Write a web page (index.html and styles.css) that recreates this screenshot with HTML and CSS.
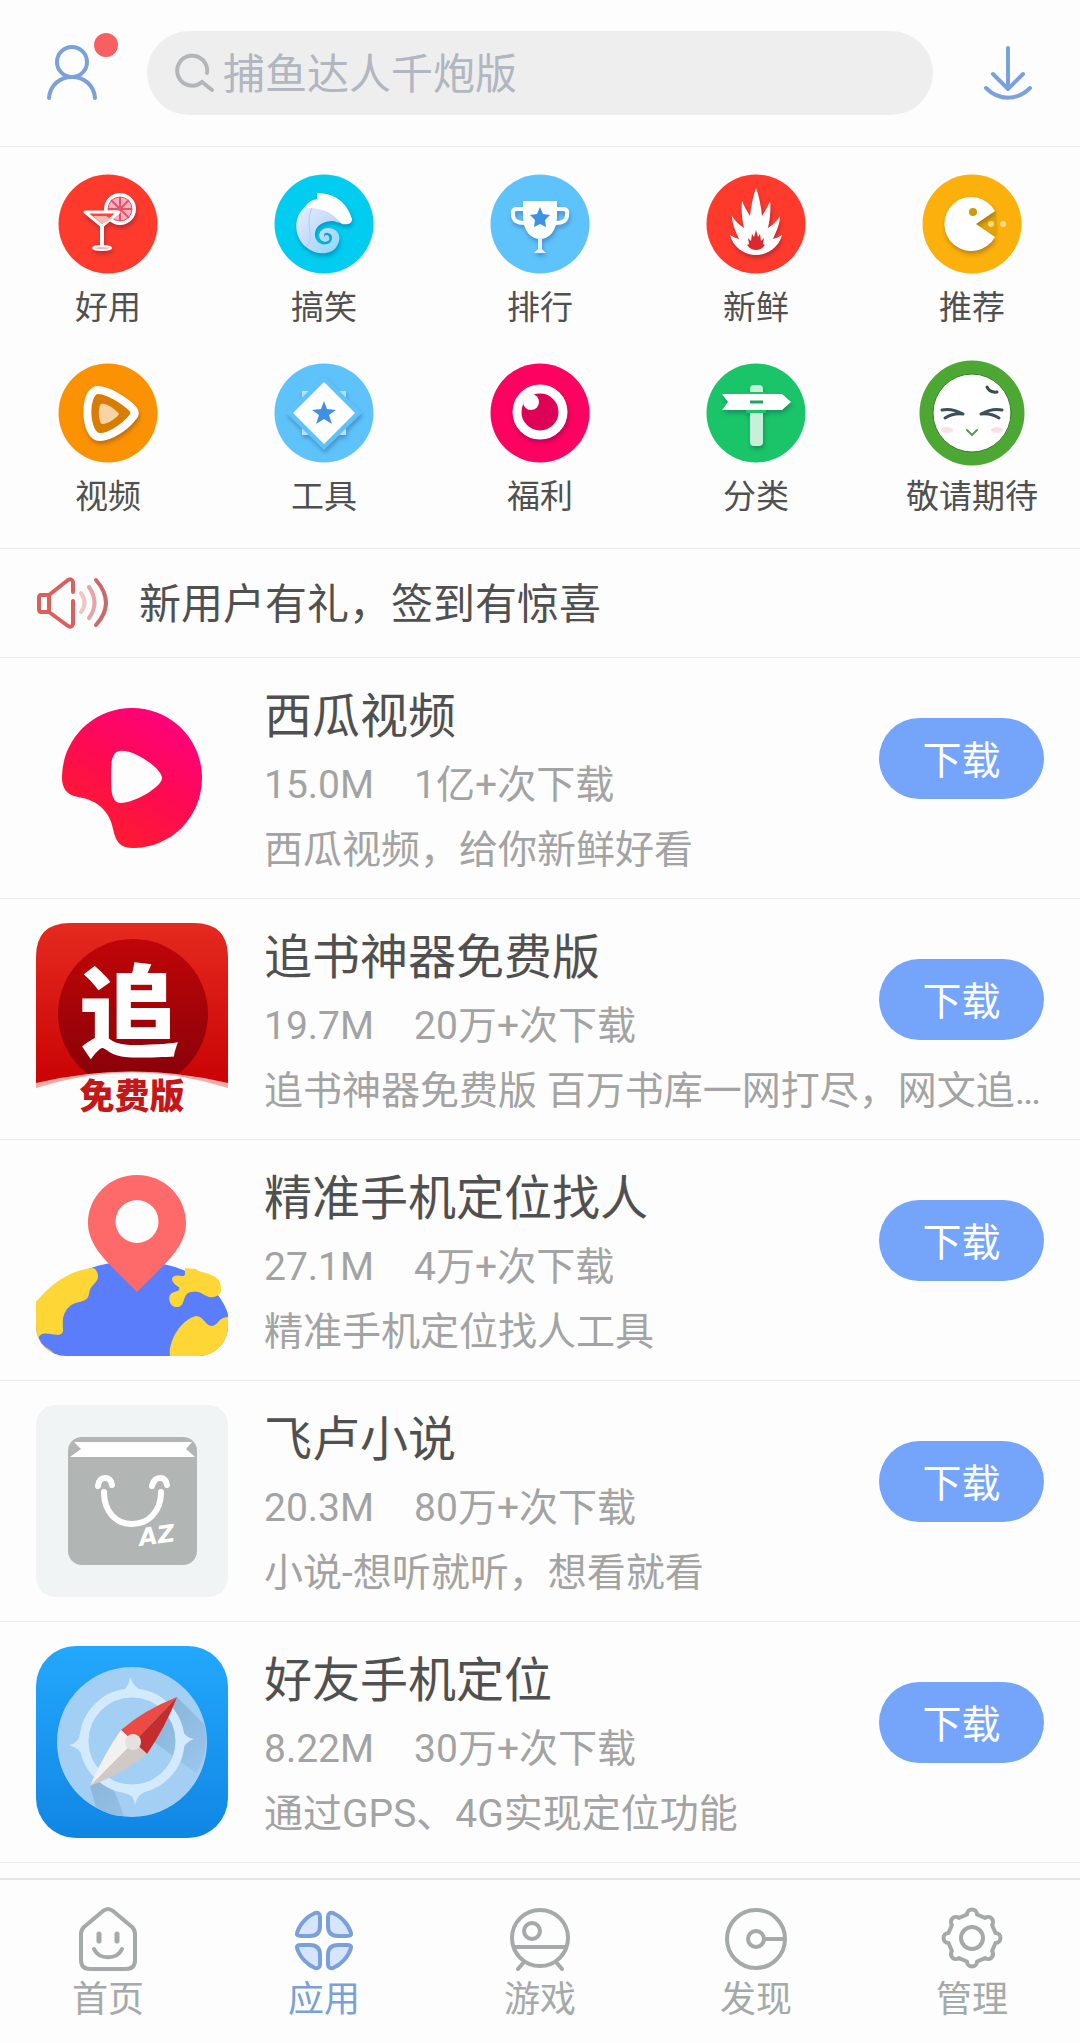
FILE: index.html
```html
<!DOCTYPE html>
<html lang="zh-CN">
<head>
<meta charset="utf-8">
<meta name="viewport" content="width=device-width, initial-scale=1">
<title>应用</title>
<link rel="stylesheet" href="styles.css">
</head>
<body>
<header class="topbar">
  <button class="icon-button profile" type="button" aria-label="我的">
    <svg width="50" height="54" viewBox="0 0 50 54" fill="none" stroke="#7ba1dc" stroke-width="4" stroke-linecap="round"><circle cx="25" cy="16" r="15"/><path d="M2 52C3 39 13 31 25 31S47 39 48 52"/></svg>
    <span class="dot"></span>
  </button>
  <label class="search">
    <svg width="40" height="40" viewBox="0 0 40 40" fill="none" stroke="#b3b6b9" stroke-width="4" stroke-linecap="round"><path d="M32 20A15 15 0 1 0 27 29L37 37"/></svg>
    <input class="search-input" type="search" placeholder="捕鱼达人千炮版" aria-label="搜索">
  </label>
  <button class="icon-button" type="button" aria-label="下载管理">
    <svg width="50" height="56" viewBox="0 0 50 56" fill="none" stroke="#7ba1dc" stroke-width="4" stroke-linecap="round" stroke-linejoin="round"><path d="M25 3V44M10 29L25 44L40 29M3 43C16 56 34 56 47 43"/></svg>
  </button>
</header>

<nav class="categories" aria-label="频道">
  <a class="category" href="#haoyong">
    <svg class="category-icon" viewBox="-53 -53 106 106">
      <circle r="49.500" fill="#fe3a2d"/>
      <g class="soft-shadow">
        <circle cx="12" cy="-15" r="14" fill="#fbaebd" stroke="#fff" stroke-width="4"/>
        <circle cx="12" cy="-15" r="12" fill="none" stroke="#e0546c" stroke-width="1"/>
        <path d="M12 -27V-3M0 -15H24M3 -24L21 -6M21 -24L3 -6" stroke="#e0546c" stroke-width="2"/>
        <path d="M-23 -12H11L-6 2Z" fill="#fe4438" stroke="#fff" stroke-width="3" stroke-linejoin="round"/>
        <path d="M-15 -8H-2L4 -5L-6 0Z" fill="#fbb9b9"/>
        <path d="M-6 2V23" stroke="#fff" stroke-width="4"/>
        <ellipse cx="-6" cy="24" rx="9" ry="2" fill="#fbaebd" stroke="#fff" stroke-width="2"/>
      </g>
    </svg>
    <span>好用</span>
  </a>
  <a class="category" href="#gaoxiao">
    <svg class="category-icon" viewBox="-53 -53 106 106">
      <defs><linearGradient id="tail" x1="0" y1="0" x2="1" y2="1"><stop offset="0" stop-color="#e6eefc"/><stop offset=".5" stop-color="#c4dbfa"/><stop offset="1" stop-color="#7fdcf8"/></linearGradient></defs>
      <circle r="49.500" fill="#02cdf0"/>
      <g class="soft-shadow">
        <path d="M-18 -18C-31 -8 -31 12 -18 23C-8 32 8 31 13 22C19 12 13 4 4 4C-4 4 -7 12 -3 16C1 20 7 17 5 13C4 10 0 11 1 13C-1 12 0 8 4 9C10 10 9 19 3 20C-4 22 -10 16 -9 9C-8 1 0 -3 9 -3L20 0C16 -12 0 -20 -18 -18Z" fill="url(#tail)"/>
        <path d="M-18 23C-8 12 -20 2 -12 -16" fill="none" stroke="#a9cdf7" stroke-width="1"/>
        <path d="M-7 -31C10 -31 23 -22 28 -5C28 0 23 1 18 0C10 -10 0 -17 -20 -16C-16 -22 -12 -24 -7 -25Z" fill="#fff"/>
      </g>
    </svg>
    <span>搞笑</span>
  </a>
  <a class="category" href="#paihang">
    <svg class="category-icon" viewBox="-53 -53 106 106">
      <circle r="49.500" fill="#5fc3fb"/>
      <g class="soft-shadow">
        <path d="M-15 -15H-24Q-28 -15 -27 -9Q-27 -1 -15 -1M15 -15H24Q28 -15 27 -9Q27 -1 15 -1" fill="none" stroke="#fff" stroke-width="4"/>
        <path d="M-17 -23H17V-8C17 7 9 15 0 15S-17 7 -17 -8Z" fill="#fff"/>
        <path d="M-2 14H2V25L6 29H-6L-2 25Z" fill="#dff1fe"/>
        <path d="M0 -17L3 -10L10 -9L5 -4L6 3L0 0L-6 3L-5 -4L-10 -9L-3 -10Z" fill="#3b93e4"/>
      </g>
    </svg>
    <span>排行</span>
  </a>
  <a class="category" href="#xinxian">
    <svg class="category-icon" viewBox="-53 -53 106 106">
      <circle r="49.500" fill="#fe3a2d"/>
      <g class="soft-shadow">
        <path d="M0 -36C3 -28 5 -18 6 -8C9 -13 12 -18 14 -23C15 -14 14 -5 12 4C17 1 21 -3 24 -8C24 0 20 8 17 15C20 14 23 13 26 11C23 23 12 31 0 31S-23 23 -26 11C-23 13 -20 14 -17 15C-20 8 -24 0 -24 -8C-21 -3 -17 1 -12 4C-14 -5 -15 -14 -14 -23C-12 -18 -9 -13 -6 -8C-5 -18 -3 -28 0 -36Z" fill="#fff"/>
        <path d="M0 6L2 13L4 10L5 17L8 14L7 20L9 21C6 25 3 26 0 26S-6 25 -9 21L-7 20L-8 14L-5 17L-4 10L-2 13Z" fill="#d9292f"/>
      </g>
    </svg>
    <span>新鲜</span>
  </a>
  <a class="category" href="#tuijian">
    <svg class="category-icon" viewBox="-53 -53 106 106">
      <circle r="49.500" fill="#fcb00c"/>
      <path d="M4 0L24 -13L26 10L22 14Z" fill="#e3a408"/>
      <g class="soft-shadow">
        <path d="M4 0L23 -13A27 27 0 1 0 23 13Z" fill="#fff"/>
        <circle cx="1" cy="-12" r="4" fill="#d1990c"/>
      </g>
      <circle cx="19" cy="0" r="3" fill="#f8d784"/><circle cx="31" cy="0" r="3" fill="#f8d784"/>
    </svg>
    <span>推荐</span>
  </a>
  <a class="category" href="#shipin">
    <svg class="category-icon" viewBox="-53 -53 106 106">
      <circle r="49.500" fill="#fb9203"/>
      <g class="soft-shadow">
        <path d="M-10 -23C0 -23 17 -12 24 -5Q29 0 24 5C17 14 2 24 -8 24C-24 24 -25 -23 -10 -23Z" fill="#d97c03" stroke="#fff" stroke-width="8" stroke-linejoin="round"/>
        <path d="M-7 -9C-3 -11 9 -3 11 1C9 5 -2 12 -6 11C-10 9 -10 -7 -7 -9Z" fill="#f8d3a3"/>
      </g>
    </svg>
    <span>视频</span>
  </a>
  <a class="category" href="#gongju">
    <svg class="category-icon" viewBox="-53 -53 106 106">
      <circle r="49.500" fill="#5fc3fb"/>
      <g class="soft-shadow">
        <path d="M-22 -22H22V22H-22Z" fill="#b8e2fd"/>
        <path d="M0 -37L38 0L0 37L-38 0Z" fill="#5fc3fb"/>
        <path d="M0 -31L31 0L0 31L-31 0Z" fill="#fff"/>
        <path d="M0 -12L3 -4L12 -3L5 2L8 11L0 6L-8 11L-5 2L-12 -3L-3 -4Z" fill="#3f90e3"/>
      </g>
    </svg>
    <span>工具</span>
  </a>
  <a class="category" href="#fuli">
    <svg class="category-icon" viewBox="-53 -53 106 106">
      <circle r="49.500" fill="#fd0261"/>
      <g class="soft-shadow">
        <circle cx="0" cy="-1" r="23" fill="#de0257" stroke="#fff" stroke-width="9"/>
        <circle cx="-9" cy="-11" r="8" fill="#fff"/>
      </g>
    </svg>
    <span>福利</span>
  </a>
  <a class="category" href="#fenlei">
    <svg class="category-icon" viewBox="-53 -53 106 106">
      <circle r="49.500" fill="#19c568"/>
      <g class="soft-shadow">
        <rect x="-6" y="-28" width="13" height="61" rx="4" fill="#c6f0d8"/>
        <path d="M-10 -21H10V-19H-10ZM-10 -3H10V0H-10Z" fill="#19c568"/>
        <path d="M-34 -19H26L35 -11L26 -3H-34L-28 -11Z" fill="#fff"/>
        <path d="M-6 -11H7" stroke="#1aa75c" stroke-width="3"/>
      </g>
    </svg>
    <span>分类</span>
  </a>
  <a class="category" href="#jingqing">
    <svg class="category-icon" viewBox="-53 -53 106 106" fill="none" stroke-linecap="round">
      <circle r="52.500" fill="#4da833"/><circle r="39" fill="#fff" stroke="#35802a" stroke-width="1"/>
      <path d="M15 -26Q18 -20 25 -21" stroke="#3b4a50" stroke-width="3"/>
      <path d="M-30 -3Q-20 -5 -9 1M-27 5Q-19 0 -9 1M30 -3Q20 -5 9 1M27 5Q19 0 9 1" stroke="#3c5058" stroke-width="3"/>
      <path d="M-5 17L0 22L5 17" stroke="#5a9a56" stroke-width="2"/>
      <ellipse cx="-25" cy="17" rx="6" ry="3" fill="#fbdfe6"/><ellipse cx="25" cy="17" rx="6" ry="3" fill="#fbdfe6"/>
    </svg>
    <span>敬请期待</span>
  </a>
</nav>

<a class="notice" href="#signin">
  <svg width="74" height="52" viewBox="0 0 74 52" fill="none" stroke="#d9605c" stroke-width="4" stroke-linecap="round" stroke-linejoin="round">
    <path d="M37 15V5Q36 1 32 3L13 18H5Q3 18 3 21V32Q3 35 5 35H13L32 49Q36 51 37 47V24M13 18V35"/>
    <path d="M45 16Q52 26 45 35" stroke="#f3c4c4"/><path d="M53 10Q64 26 53 41" stroke="#e7a3a5"/><path d="M60 3Q80 26 60 48" stroke="#cb6a6b"/>
  </svg>
  <span class="notice-text">新用户有礼，签到有惊喜</span>
</a>

<main>
<ul class="apps">
  <li class="app">
    <svg class="app-icon" viewBox="0 0 192 192">
      <defs><linearGradient id="melon" x1=".8" y1=".1" x2=".3" y2=".9"><stop offset="0" stop-color="#fc0279"/><stop offset=".5" stop-color="#fd0a53"/><stop offset="1" stop-color="#fe1b30"/></linearGradient></defs>
      <path fill="url(#melon)" fill-rule="evenodd" d="M96 26C135 26 166 57 166 96C166 135 135 166 97 166C85 166 80 161 77 147C74 130 62 118 42 115C30 113 26 105 26 96C26 57 57 26 96 26ZM83 69C75 71 75 82 75 96C75 110 76 121 85 121C98 121 126 105 126 96C126 86 96 66 83 69Z"/>
    </svg>
    <h2 class="app-name">西瓜视频</h2>
    <p class="app-meta"><span>15.0M</span><span>1亿+次下载</span></p>
    <p class="app-desc">西瓜视频，给你新鲜好看</p>
    <button class="download" type="button">下载</button>
  </li>
  <li class="app">
    <svg class="app-icon" viewBox="0 0 192 192">
      <defs>
        <linearGradient id="book" x1="0" y1="0" x2="0" y2="1"><stop offset="0" stop-color="#e52a1f"/><stop offset="1" stop-color="#c90204"/></linearGradient>
        <linearGradient id="disc" x1="0" y1="0" x2="0" y2="1"><stop offset="0" stop-color="#c00508"/><stop offset="1" stop-color="#8a0209"/></linearGradient>
      </defs>
      <path d="M0 165V34Q0 0 34 0H158Q192 0 192 34V165Q96 136 0 165Z" fill="url(#book)"/>
      <path d="M52 151A75 75 0 1 1 142 151Q96 145 52 151Z" fill="url(#disc)"/>
      <path d="M0 160Q96 137 192 160V166Q96 136 0 166Z" fill="#f6aaa5"/>
      <path d="M0 165Q96 134 192 165V192H0Z" fill="#fdfdfd"/>
      <text class="badge-glyph" x="93" y="126" text-anchor="middle">追</text>
      <text class="badge-caption" x="96" y="186" text-anchor="middle">免费版</text>
    </svg>
    <h2 class="app-name">追书神器免费版</h2>
    <p class="app-meta"><span>19.7M</span><span>20万+次下载</span></p>
    <p class="app-desc">追书神器免费版 百万书库一网打尽，网文追…</p>
    <button class="download" type="button">下载</button>
  </li>
  <li class="app">
    <svg class="app-icon" viewBox="0 0 192 192">
      <defs><clipPath id="tile"><rect width="192" height="192" rx="30"/></clipPath></defs>
      <g clip-path="url(#tile)">
        <path d="M0 138C30 110 60 97 101 97C140 98 180 114 192 150V192H0Z" fill="#597dfb"/>
        <path d="M0 138C18 116 38 106 56 104Q61 104 62 112C62 120 54 120 53 130C51 140 41 136 34 142C25 150 27 159 27 167C25 175 15 168 6 170Q2 172 2 176L0 180ZM2 174C6 184 14 183 20 192H0Z" fill="#fed736"/>
        <path d="M134 192C132 176 146 155 160 152C168 152 169 162 176 162C182 162 182 153 192 153V192Z" fill="#fed736"/>
      </g>
      <path d="M149 104L160 105C164 109 170 108 175 111Q186 114 185 127Q183 134 173 133C166 130 162 126 155 128C146 129 150 142 142 143C134 144 132 135 134 131C138 126 145 129 143 123C139 121 134 116 137 113C142 109 148 115 149 110Z" fill="#fed736"/>
      <path fill="#fe6a69" fill-rule="evenodd" d="M101 11C129 11 150 33 150 59C150 80 133 96 121 108L101 128L81 108C69 96 52 80 52 59C52 33 73 11 101 11ZM101 36A21 21 0 1 0 101 79A21 21 0 1 0 101 36Z"/>
    </svg>
    <h2 class="app-name">精准手机定位找人</h2>
    <p class="app-meta"><span>27.1M</span><span>4万+次下载</span></p>
    <p class="app-desc">精准手机定位找人工具</p>
    <button class="download" type="button">下载</button>
  </li>
  <li class="app">
    <svg class="app-icon" viewBox="0 0 192 192">
      <rect width="192" height="192" rx="20" fill="#f0f4f5"/>
      <rect x="32" y="32" width="129" height="128" rx="14" fill="#b1b5b4"/>
      <path d="M38 37H156L150 44L159 52H34L45 44Z" fill="#fff"/>
      <g fill="none" stroke="#fff" stroke-width="6" stroke-linecap="round"><path d="M68 87C68 107 80 119 96 119S125 107 125 87"/><path d="M62 81Q63 73 69 73Q75 73 76 80M116 81Q118 73 124 73Q130 73 131 80"/></g>
      <text class="bag-mark" x="104" y="141" transform="rotate(-8 104 141)">AZ</text>
    </svg>
    <h2 class="app-name">飞卢小说</h2>
    <p class="app-meta"><span>20.3M</span><span>80万+次下载</span></p>
    <p class="app-desc">小说-想听就听，想看就看</p>
    <button class="download" type="button">下载</button>
  </li>
  <li class="app">
    <svg class="app-icon" viewBox="0 0 192 192">
      <defs>
        <linearGradient id="sky" x1="0" y1="0" x2="0" y2="1"><stop offset="0" stop-color="#23a8fd"/><stop offset="1" stop-color="#1086e4"/></linearGradient>
        <linearGradient id="shade" x1="0" y1="0" x2="1" y2="1"><stop offset="0" stop-color="#7da6cc"/><stop offset="1" stop-color="#a3cff5"/></linearGradient>
      </defs>
      <rect width="192" height="192" rx="40" fill="url(#sky)"/>
      <circle cx="96" cy="96" r="75" fill="#a3cff5"/>
      <path d="M141 51L168 78C173 98 168 115 160 127L118 96ZM54 140L60 161Q75 171 88 170L72 128Z" fill="url(#shade)"/>
      <circle cx="96" cy="95" r="48" fill="none" stroke="#d3eafd" stroke-width="9"/>
      <path d="M86 45Q93 41 94 31Q98 41 106 45ZM146 83Q149 92 158 93Q149 96 146 105ZM88 147Q98 148 99 159Q101 149 109 146ZM44 88Q43 97 33 99Q42 102 46 108Z" fill="#d3eafd"/>
      <path d="M141 51Q108 64 85 84L98 96Z" fill="#ec4a43"/><path d="M141 51Q130 80 111 108L98 96Z" fill="#c42d2e"/>
      <path d="M54 140Q68 108 85 84L98 96Z" fill="#f3f1ef"/><path d="M54 140Q86 128 111 108L98 96Z" fill="#cfcac6"/>
      <circle cx="97" cy="96" r="8" fill="#e6e1de"/>
    </svg>
    <h2 class="app-name">好友手机定位</h2>
    <p class="app-meta"><span>8.22M</span><span>30万+次下载</span></p>
    <p class="app-desc">通过GPS、4G实现定位功能</p>
    <button class="download" type="button">下载</button>
  </li>
</ul>
</main>

<nav class="tabbar" aria-label="主导航">
  <a class="tab" href="#home">
    <svg class="tab-icon" viewBox="0 0 66 66"><path d="M28 5Q33 1 38 5L57 21Q60 24 60 28V54Q60 63 51 63H15Q6 63 6 54V28Q6 24 9 21Z"/><path d="M24 28V35M42 28V35" stroke-width="5"/><path d="M19 43C24 54 42 54 47 43"/></svg>
    <span>首页</span>
  </a>
  <a class="tab tab-active" href="#apps" aria-current="page">
    <svg class="tab-icon" viewBox="0 0 66 66"><g fill="#d5e5fc"><path d="M6 27C9 17 17 10 24 7Q29 6 29 11V20Q29 30 19 30H10Q5 30 6 27Z"/><path d="M60 27C57 17 49 10 42 7Q37 6 37 11V20Q37 30 47 30H56Q61 30 60 27Z"/><path d="M6 42C9 52 17 59 24 62Q29 63 29 58V49Q29 39 19 39H10Q5 39 6 42Z"/><path d="M60 42C57 52 49 59 42 62Q37 63 37 58V49Q37 39 47 39H56Q61 39 60 42Z"/></g></svg>
    <span>应用</span>
  </a>
  <a class="tab" href="#games">
    <svg class="tab-icon" viewBox="0 0 66 66"><circle cx="33" cy="32" r="28"/><circle cx="25" cy="25" r="8"/><path d="M7 41H59M17 56L11 63M49 56L55 63"/></svg>
    <span>游戏</span>
  </a>
  <a class="tab" href="#discover">
    <svg class="tab-icon" viewBox="0 0 66 66"><circle cx="33" cy="33" r="29"/><circle cx="33" cy="33" r="8"/><path d="M42 33H61"/></svg>
    <span>发现</span>
  </a>
  <a class="tab" href="#manage">
    <svg class="tab-icon" viewBox="-33 -32 66 66"><circle r="11"/><path d="M-5 -23.500A5 5 0 0 1 5 -23.500L13.100 -20.100A5 5 0 0 1 20.100 -13.100L23.500 -5A5 5 0 0 1 23.500 5L20.100 13.100A5 5 0 0 1 13.100 20.100L5 23.500A5 5 0 0 1 -5 23.500L-13.100 20.100A5 5 0 0 1 -20.100 13.100L-23.500 5A5 5 0 0 1 -23.500 -5L-20.100 -13.100A5 5 0 0 1 -13.100 -20.100Z"/></svg>
    <span>管理</span>
  </a>
</nav>
</body>
</html>
```
FILE: styles.css
```css
* {
  box-sizing: border-box;
}

body {
  margin: 0;
  background: #fdfdfd;
  color: #505050;
  font-family: Roboto, "Noto Sans CJK SC", sans-serif;
}

a {
  color: inherit;
  text-decoration: none;
}

button {
  border: 0;
  padding: 0;
  font-family: inherit;
  cursor: pointer;
}

svg {
  display: block;
  flex: none;
  overflow: visible;
}

/* Top bar */
.topbar {
  display: flex;
  align-items: center;
  gap: 50px;
  padding: 31px 47px;
  border-bottom: 1px solid #ebebeb;
}

.icon-button {
  position: relative;
  background: none;
}

.dot {
  position: absolute;
  top: -13px;
  right: -21px;
  width: 24px;
  height: 24px;
  border-radius: 50%;
  background: #f85f60;
}

.search {
  display: flex;
  flex: 1;
  align-items: center;
  gap: 8px;
  height: 84px;
  padding: 0 28px;
  border-radius: 42px;
  background: #eeeeee;
}

.search-input {
  flex: 1;
  min-width: 0;
  height: 60px;
  padding: 2px 0 0;
  border: 0;
  outline: 0;
  background: none;
  color: #505050;
  font-family: inherit;
  font-size: 42px;
}

.search-input::placeholder {
  color: #b1b6c0;
  opacity: 1;
}

/* Category grid */
.categories {
  display: grid;
  grid-template-columns: repeat(5, 1fr);
  row-gap: 28px;
  padding: 24px 0 27px;
  border-bottom: 1px solid #ebebeb;
}

.category {
  display: flex;
  flex-direction: column;
  align-items: center;
  gap: 7px;
  font-size: 33px;
  line-height: 48px;
}

.category-icon {
  width: 106px;
  height: 106px;
}

.soft-shadow {
  filter: drop-shadow(1px 3px 2px rgba(0, 0, 60, 0.25));
}

/* Notice */
.notice {
  display: flex;
  align-items: center;
  gap: 29px;
  height: 109px;
  padding: 0 36px;
  border-bottom: 1px solid #ebebeb;
  font-size: 42px;
}

.notice-text {
  padding-bottom: 5px;
}

/* App list */
.apps {
  margin: 0;
  padding: 0 0 15px;
  list-style: none;
}

.app {
  display: grid;
  grid-template-columns: 192px 1fr 165px;
  grid-template-rows: 70px 66px 64px;
  column-gap: 36px;
  padding: 24px 36px 16px;
  border-bottom: 1px solid #ebebeb;
}

.app-icon {
  grid-row: 1 / 4;
  width: 192px;
  height: 192px;
}

.app-name,
.app-meta,
.app-desc {
  margin: 0;
  font-weight: 400;
  white-space: nowrap;
}

.app-name {
  grid-area: 1 / 2;
  font-size: 48px;
  line-height: 70px;
}

.app-meta {
  grid-area: 2 / 2;
  display: flex;
  gap: 40px;
  color: #a3a3a3;
  font-size: 39px;
  line-height: 66px;
}

.app-desc {
  grid-area: 3 / 2 / 4 / 4;
  overflow: hidden;
  color: #a3a3a3;
  font-size: 39px;
  line-height: 64px;
  text-overflow: ellipsis;
}

.download {
  grid-area: 1 / 3 / 3 / 4;
  align-self: end;
  height: 81px;
  margin-bottom: 19px;
  padding-bottom: 3px;
  border-radius: 41px;
  background: #74a5fb;
  color: #fff;
  font-size: 39px;
}

.badge-glyph {
  fill: #fff;
  font-size: 100px;
  font-weight: 900;
}

.badge-caption {
  fill: #c5161a;
  font-size: 35px;
  font-weight: 900;
}

.bag-mark {
  fill: #fff;
  font-family: "DejaVu Sans", sans-serif;
  font-size: 24px;
  font-style: italic;
  font-weight: 700;
}

/* Bottom tabs */
.tabbar {
  display: grid;
  grid-template-columns: repeat(5, 1fr);
  padding: 26px 0 17px;
  border-top: 2px solid #e6e6e6;
}

.tab {
  display: flex;
  flex-direction: column;
  align-items: center;
  gap: 2px;
  color: #a5a9a9;
  font-size: 36px;
  line-height: 52px;
}

.tab-active {
  color: #7aa0da;
}

.tab-icon {
  width: 66px;
  height: 66px;
  fill: none;
  stroke: currentColor;
  stroke-width: 4px;
  stroke-linecap: round;
  stroke-linejoin: round;
}
```
